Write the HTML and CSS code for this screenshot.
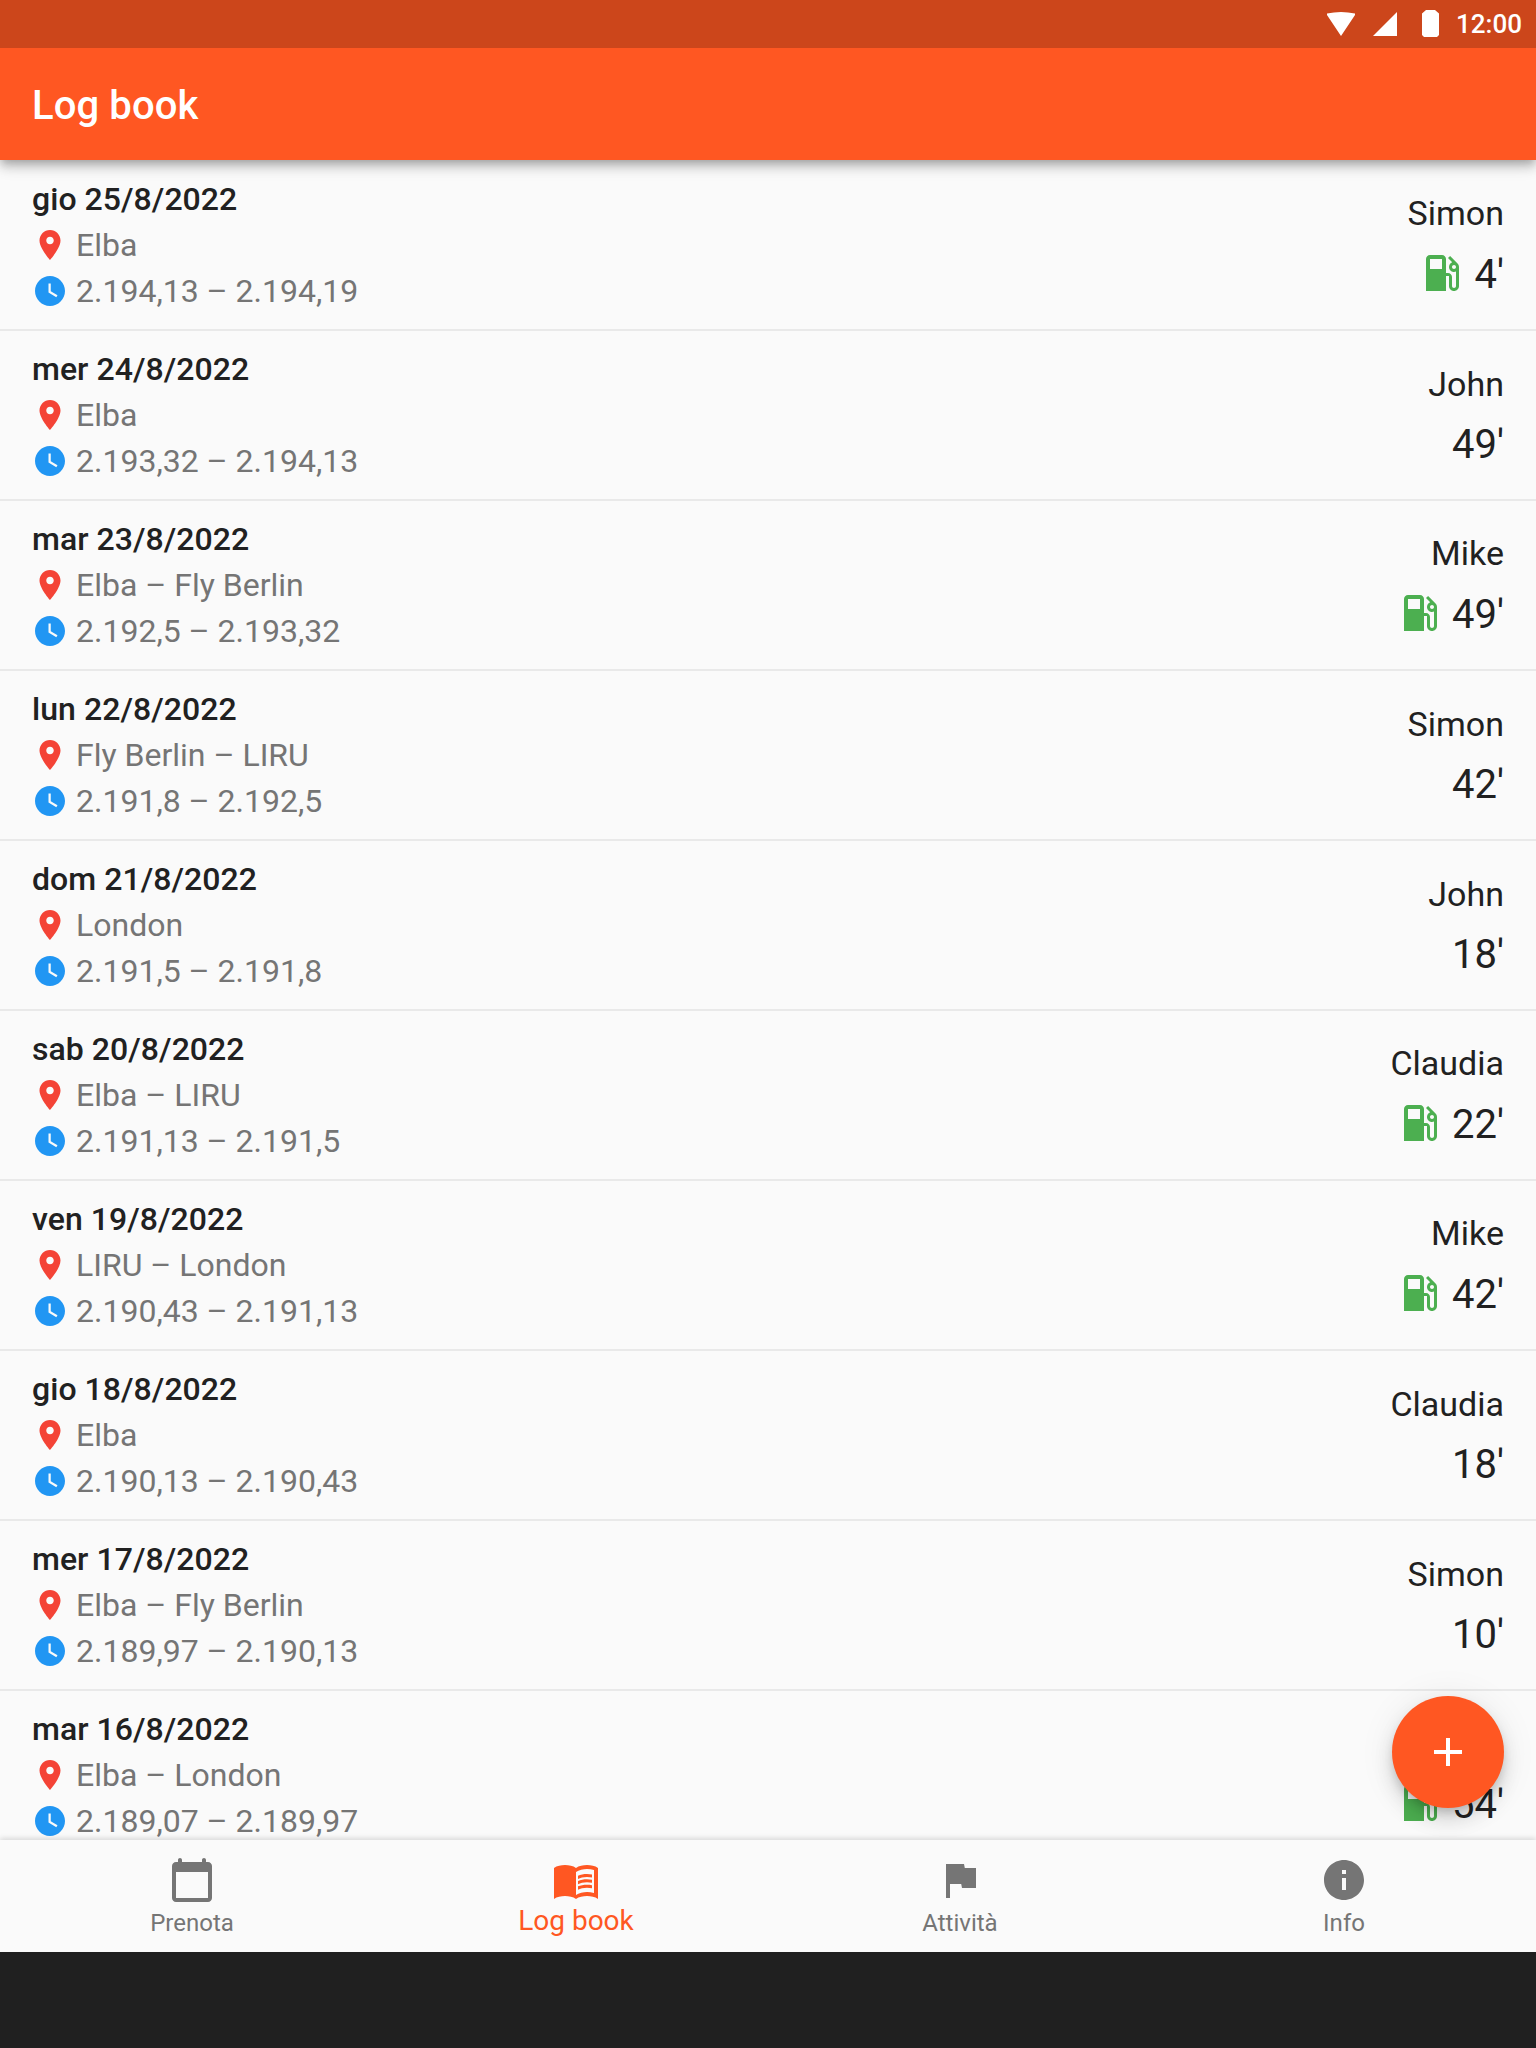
FILE: index.html
```html
<!DOCTYPE html>
<html lang="it">
<head>
<meta charset="utf-8">
<title>Log book</title>
<link rel="stylesheet" href="styles.css">
</head>
<body>
<svg class="defs" aria-hidden="true">
  <symbol id="pin" viewBox="0 0 24 24"><path d="M12 2C8.130 2 5 5.130 5 9c0 5.250 7 13 7 13s7-7.750 7-13c0-3.870-3.130-7-7-7zm0 9.500c-1.380 0-2.500-1.120-2.500-2.500s1.120-2.500 2.500-2.500 2.500 1.120 2.500 2.500-1.120 2.500-2.500 2.500z"/></symbol>
  <symbol id="clock" viewBox="0 0 24 24"><path d="M12 2C6.500 2 2 6.500 2 12s4.500 10 10 10 10-4.500 10-10S17.500 2 12 2zm4.200 14.200L11 13V7h1.500v5.200l4.500 2.700-.8 1.300z"/></symbol>
  <symbol id="fuel" viewBox="0 0 24 24"><path d="M19.770 7.230l.01-.01-3.720-3.720L15 4.560l2.110 2.110c-.94.36-1.610 1.260-1.610 2.330 0 1.380 1.120 2.500 2.500 2.500.36 0 .69-.08 1-.21v7.210c0 .55-.45 1-1 1s-1-.45-1-1V14c0-1.100-.9-2-2-2h-1V5c0-1.100-.9-2-2-2H6c-1.100 0-2 .9-2 2v16h10v-7.500h1.500v5c0 1.380 1.120 2.500 2.500 2.500s2.500-1.120 2.500-2.500V9c0-.69-.28-1.320-.73-1.770zM12 10H6V5h6v5zm6 0c-.55 0-1-.45-1-1s.45-1 1-1 1 .45 1 1-.45 1-1 1z"/></symbol>
</svg>

<header class="top">
  <div class="status">
    <svg class="status-icons" width="120" height="48" viewBox="0 0 120 48"><path d="M7 13.500Q21 10.500 35 13.500V15L21 36 7 15zM53 36L77 12V36zM106 10h9l4 3.500V35l-2 2h-13l-2-2V13.500z"/></svg>
    <span class="time">12:00</span>
  </div>
  <h1 class="title">Log book</h1>
</header>

<main class="list" id="list"></main>

<nav class="nav">
  <a class="tab"><svg viewBox="0 0 24 24"><path d="M20 3h-1V2c0-.55-.45-1-1-1s-1 .45-1 1v1H7V2c0-.55-.45-1-1-1s-1 .45-1 1v1H4c-1.100 0-2 .9-2 2v16c0 1.100.9 2 2 2h16c1.100 0 2-.9 2-2V5c0-1.100-.9-2-2-2zm0 18H4V8h16v13z"/></svg><span>Prenota</span></a>
  <a class="tab active"><svg viewBox="0 0 24 24"><path d="M17.500 4.500c-1.950 0-4.050.4-5.500 1.500-1.450-1.100-3.550-1.500-5.500-1.500S2.450 4.900 1 6v15.500C2.450 20.400 4.550 20 6.500 20s4.050.4 5.500 1.500c1.450-1.100 3.550-1.500 5.500-1.500 1.950 0 4.050.4 5.500 1.500V6c-1.450-1.100-3.550-1.500-5.500-1.500zM21 18.500c-1.100-.35-2.300-.5-3.500-.5-1.700 0-4.150.65-5.500 1.500V8c1.350-.85 3.800-1.500 5.500-1.500 1.200 0 2.400.15 3.500.5v11.500z"/><path d="M17.500 10.500c.88 0 1.730.09 2.500.26V9.240c-.79-.15-1.640-.24-2.500-.24-1.700 0-3.240.29-4.500.83v1.660c1.130-.64 2.700-.99 4.500-.99zM13 12.490v1.660c1.130-.64 2.700-.99 4.500-.99.88 0 1.730.09 2.500.26V11.900c-.79-.15-1.640-.24-2.500-.24-1.700 0-3.240.3-4.500.83zM17.500 14.330c-1.700 0-3.240.29-4.500.83v1.660c1.130-.64 2.700-.99 4.500-.99.88 0 1.730.09 2.500.26v-1.520c-.79-.16-1.640-.24-2.500-.24z"/></svg><span>Log book</span></a>
  <a class="tab"><svg viewBox="0 0 24 24"><path d="M14.400 6L14 4H5v17h2v-7h5.600l.4 2h7V6z"/></svg><span>Attività</span></a>
  <a class="tab"><svg viewBox="0 0 24 24"><path d="M12 2C6.480 2 2 6.480 2 12s4.480 10 10 10 10-4.480 10-10S17.520 2 12 2zm1 15h-2v-6h2v6zm0-8h-2V7h2v2z"/></svg><span>Info</span></a>
  <button class="fab" aria-label="+"><svg viewBox="0 0 24 24"><path d="M19 13h-6v6h-2v-6H5v-2h6V5h2v6h6v2z"/></svg></button>
</nav>
<script src="list.js"></script>
</body>
</html>
```
FILE: styles.css
```css
* { box-sizing: border-box; }
body {
  margin: 0;
  height: 2048px;
  display: flex;
  flex-direction: column;
  overflow: hidden;
  background: #202020;
  color: #212121;
  font-family: Roboto, sans-serif;
}
svg { fill: currentColor; display: block; flex: none; }
.defs { display: none; }

.top {
  position: relative;
  z-index: 1;
  flex: none;
  height: 160px;
  background: #ff5722;
  color: #fff;
  box-shadow: 0 4px 8px -2px rgba(0,0,0,.2), 0 8px 10px rgba(0,0,0,.14), 0 2px 20px rgba(0,0,0,.12);
}
.status {
  height: 48px;
  display: flex;
  justify-content: flex-end;
  align-items: center;
  padding-right: 14px;
  background: #cc461b;
}
.time { width: 66px; margin-left: 16px; font-size: 26px; font-weight: 500; line-height: 48px; text-align: right; }
.title { margin: 0; padding: 2px 0 0 32px; font-size: 40px; font-weight: 500; letter-spacing: .1px; line-height: 112px; }

.list { height: 1680px; padding-top: 1px; overflow: hidden; background: #fafafa; }
.row {
  display: flex;
  justify-content: space-between;
  height: 170px;
  padding: 15px 32px 0;
  border-bottom: 2px solid #e9e9e9;
}
.date { margin: 0; font-size: 32px; font-weight: 500; letter-spacing: .05px; line-height: 46px; }
.line { display: flex; align-items: center; gap: 8px; height: 46px; font-size: 32px; color: #757575; }
.line svg { width: 36px; height: 36px; }
.pin { color: #f44336; }
.clock { color: #2196f3; }
.side { display: flex; flex-direction: column; align-items: flex-end; padding-top: 18px; }
.name { font-size: 34px; line-height: 40px; }
.fueled .name { margin: -1px 0 1px; }
.amount { display: flex; align-items: center; gap: 8.4px; height: 48px; margin-top: 15px; font-size: 40px; }
.amount span { padding-top: 2px; }
.fuel { width: 48px; height: 48px; color: #4caf50; }

.nav {
  position: relative;
  flex: none;
  display: flex;
  height: 112px;
  background: #fafafa;
  box-shadow: 0 -2px 5px rgba(0,0,0,.13);
}
.tab {
  flex: 1;
  display: flex;
  flex-direction: column;
  align-items: center;
  padding-top: 16px;
  color: #757575;
  font-size: 24px;
  line-height: 32px;
}
.tab svg { width: 48px; height: 48px; }
.tab span { margin-top: 3px; }
.active { color: #ff5722; font-size: 28px; }
.tab.active span { margin-top: 1px; }
.fab {
  position: absolute;
  right: 32px;
  bottom: 144px;
  width: 112px;
  height: 112px;
  padding: 32px;
  border: 0;
  border-radius: 50%;
  background: #ff5722;
  color: #fff;
  box-shadow: 0 6px 10px -2px rgba(0,0,0,.17), 0 12px 20px rgba(0,0,0,.12), 0 2px 36px rgba(0,0,0,.08);
}
.fab svg { width: 48px; height: 48px; }
```
FILE: list.js
```js
const flights = [
  ['gio 25/8/2022', 'Elba', '2.194,13 – 2.194,19', 'Simon', "4'", true],
  ['mer 24/8/2022', 'Elba', '2.193,32 – 2.194,13', 'John', "49'", false],
  ['mar 23/8/2022', 'Elba – Fly Berlin', '2.192,5 – 2.193,32', 'Mike', "49'", true],
  ['lun 22/8/2022', 'Fly Berlin – LIRU', '2.191,8 – 2.192,5', 'Simon', "42'", false],
  ['dom 21/8/2022', 'London', '2.191,5 – 2.191,8', 'John', "18'", false],
  ['sab 20/8/2022', 'Elba – LIRU', '2.191,13 – 2.191,5', 'Claudia', "22'", true],
  ['ven 19/8/2022', 'LIRU – London', '2.190,43 – 2.191,13', 'Mike', "42'", true],
  ['gio 18/8/2022', 'Elba', '2.190,13 – 2.190,43', 'Claudia', "18'", false],
  ['mer 17/8/2022', 'Elba – Fly Berlin', '2.189,97 – 2.190,13', 'Simon', "10'", false],
  ['mar 16/8/2022', 'Elba – London', '2.189,07 – 2.189,97', '', "54'", true],
];

const icon = (name) => `<svg class="${name}"><use href="#${name}"/></svg>`;

document.getElementById('list').innerHTML = flights.map(([date, place, hours, pilot, minutes, fuel]) => `
  <article class="row${fuel ? ' fueled' : ''}">
    <div>
      <h2 class="date">${date}</h2>
      <div class="line">${icon('pin')}<span>${place}</span></div>
      <div class="line">${icon('clock')}<span>${hours}</span></div>
    </div>
    <div class="side">
      <div class="name">${pilot || '&nbsp;'}</div>
      <div class="amount">${fuel ? icon('fuel') : ''}<span>${minutes}</span></div>
    </div>
  </article>`).join('');
```
